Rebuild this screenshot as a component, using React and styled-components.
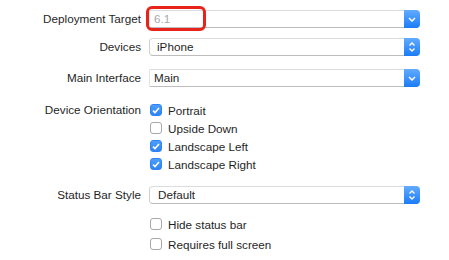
import React from 'react';
import styled, { createGlobalStyle } from 'styled-components';

const GlobalStyle = createGlobalStyle`
	body {
		margin: 0;
		background: #ffffff;
		font-family: 'Liberation Sans', Arial, sans-serif;
		font-size: 11.7px;
		color: #1f1f1f;
	}
`;

const Form = styled.div`
	display: flex;
	flex-direction: column;
	padding-top: 10px;
	width: 449px;
`;

const Row = styled.div`
	display: flex;
	align-items: ${({ $top }) => ($top ? 'flex-start' : 'center')};
	margin-top: ${({ $gap }) => $gap || 0}px;
`;

const Label = styled.div`
	width: 141px;
	text-align: right;
	padding-right: 8px;
	line-height: 18px;
	flex-shrink: 0;
`;

const Popup = styled.div`
	position: relative;
	display: flex;
	align-items: center;
	width: 270px;
	height: 18px;
	box-sizing: border-box;
	background: #fff;
	border-top: 1px solid #dcdcdc;
	border-bottom: 1px solid #bdbdbd;
	border-left: 1px solid ${({ $rounded }) => ($rounded ? '#d0d0d0' : '#e4e4e4')};
	border-radius: ${({ $rounded }) => ($rounded ? '4px' : '1px')} 4px 4px
		${({ $rounded }) => ($rounded ? '4px' : '1px')};
`;

const Value = styled.span`
	flex: 1;
	padding-left: ${({ $pad }) => $pad || 4}px;
	color: ${({ $dim }) => ($dim ? '#a9a9a9' : '#1f1f1f')};
	line-height: 16px;
`;

const Arrow = styled.div`
	display: flex;
	align-items: center;
	justify-content: center;
	width: 16px;
	height: 18px;
	margin: -1px -1px -1px 0;
	border-radius: 0 4px 4px 0;
	background: linear-gradient(#63abff, #1a7cf7);
`;

const Highlight = styled.div`
	position: absolute;
	left: -4px;
	top: -5px;
	width: 60px;
	height: 25px;
	box-sizing: border-box;
	border: 3px solid #e8231c;
	border-radius: 6px;
`;

const Checks = styled.div`
	display: flex;
	flex-direction: column;
`;

const CheckRow = styled.div`
	display: flex;
	align-items: center;
	height: ${({ $h }) => $h || 18}px;
`;

const Box = styled.span`
	display: flex;
	align-items: center;
	justify-content: center;
	width: 12px;
	height: 12px;
	box-sizing: border-box;
	margin-left: 1px;
	margin-right: 6px;
	border-radius: 3px;
	background: ${({ $on }) => ($on ? 'linear-gradient(#4d9dfb, #2f84f3)' : '#fff')};
	border: 1px solid ${({ $on }) => ($on ? '#2f84f3' : '#a8a8a8')};
`;

const Down = () => (
	<svg width="8" height="5" viewBox="0 0 8 5">
		<path d="M1 1 L4 4 L7 1" fill="none" stroke="#fff" strokeWidth="1.5" />
	</svg>
);

const UpDown = () => (
	<svg width="8" height="12" viewBox="0 0 8 12">
		<path d="M1.5 4.5 L4 2 L6.5 4.5 M1.5 7.5 L4 10 L6.5 7.5" fill="none" stroke="#fff" strokeWidth="1.4" />
	</svg>
);

const Tick = () => (
	<svg width="8" height="7" viewBox="0 0 8 7">
		<path d="M1 3.6 L3 5.6 L7 1" fill="none" stroke="#fff" strokeWidth="1.6" />
	</svg>
);

function Check({ on, label, h }) {
	return (
		<CheckRow $h={h}>
			<Box $on={on}>{on && <Tick />}</Box>
			{label}
		</CheckRow>
	);
}

export default function App() {
	return (
		<Form>
			<GlobalStyle />
			<Row>
				<Label>Deployment Target</Label>
				<Popup>
					<Value $dim>6.1</Value>
					<Arrow>
						<Down />
					</Arrow>
					<Highlight />
				</Popup>
			</Row>
			<Row $gap={10}>
				<Label>Devices</Label>
				<Popup $rounded>
					<Value $pad={7}>iPhone</Value>
					<Arrow>
						<UpDown />
					</Arrow>
				</Popup>
			</Row>
			<Row $gap={13}>
				<Label>Main Interface</Label>
				<Popup>
					<Value>Main</Value>
					<Arrow>
						<Down />
					</Arrow>
				</Popup>
			</Row>
			<Row $gap={14} $top>
				<Label>Device Orientation</Label>
				<Checks>
					<Check on label="Portrait" />
					<Check label="Upside Down" />
					<Check on label="Landscape Left" />
					<Check on label="Landscape Right" />
				</Checks>
			</Row>
			<Row $gap={13}>
				<Label>Status Bar Style</Label>
				<Popup $rounded>
					<Value $pad={8}>Default</Value>
					<Arrow>
						<UpDown />
					</Arrow>
				</Popup>
			</Row>
			<Row $gap={10} $top>
				<Label />
				<Checks>
					<Check h={20} label="Hide status bar" />
					<Check h={20} label="Requires full screen" />
				</Checks>
			</Row>
		</Form>
	);
}
